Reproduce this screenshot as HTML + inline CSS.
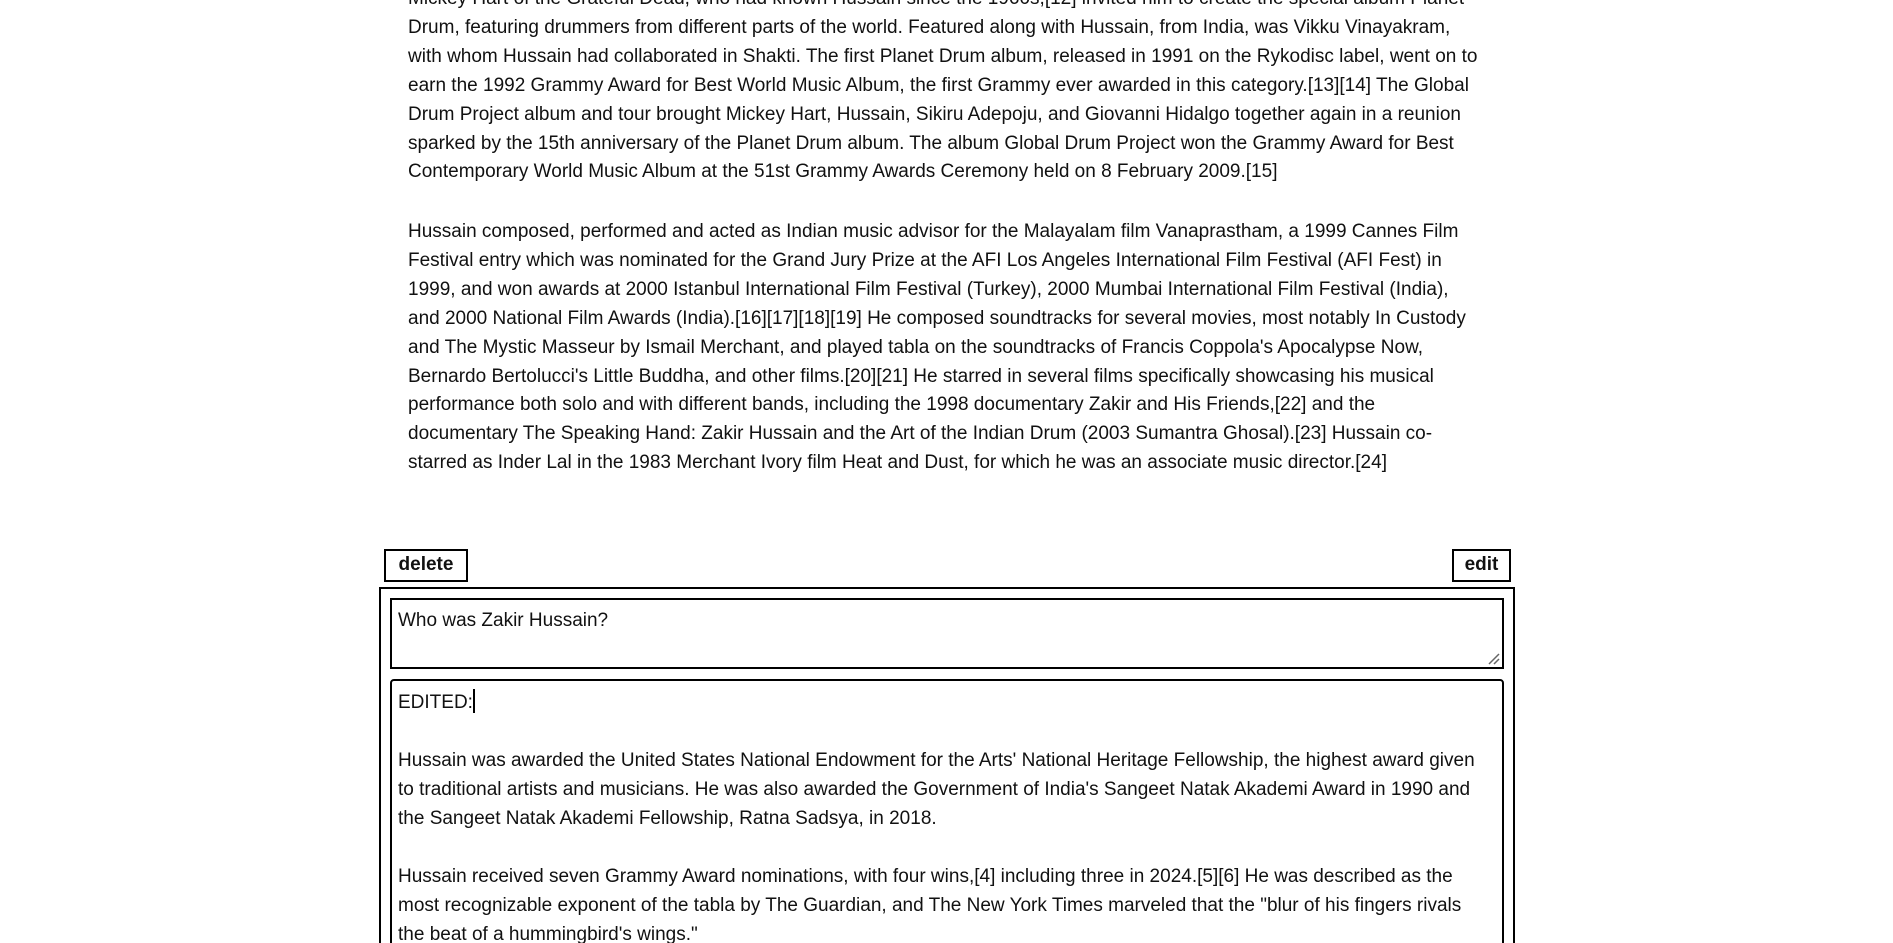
<!DOCTYPE html>
<html><head><meta charset="utf-8"><style>
html,body{margin:0;padding:0;background:#fff;width:1893px;height:943px;overflow:hidden;position:relative}
.p{position:absolute;left:408px;font-family:"Liberation Sans",sans-serif;font-size:19px;line-height:28.9px;color:#111;white-space:nowrap}
.btn{position:absolute;top:549px;height:33px;box-sizing:border-box;border:2.5px solid #000;font-family:"Liberation Sans",sans-serif;font-weight:bold;font-size:19px;line-height:28px;text-align:center;color:#111}
.box{position:absolute;border:2.5px solid #000;box-sizing:border-box}
.t{position:absolute;left:398px;font-family:"Liberation Sans",sans-serif;font-size:19px;line-height:29px;color:#111;white-space:nowrap}
</style></head><body>
<div class="p" style="top:-15px">Mickey Hart of the Grateful Dead, who had known Hussain since the 1960s,[12] invited him to create the special album Planet<br>Drum, featuring drummers from different parts of the world. Featured along with Hussain, from India, was Vikku Vinayakram,<br>with whom Hussain had collaborated in Shakti. The first Planet Drum album, released in 1991 on the Rykodisc label, went on to<br>earn the 1992 Grammy Award for Best World Music Album, the first Grammy ever awarded in this category.[13][14] The Global<br>Drum Project album and tour brought Mickey Hart, Hussain, Sikiru Adepoju, and Giovanni Hidalgo together again in a reunion<br>sparked by the 15th anniversary of the Planet Drum album. The album Global Drum Project won the Grammy Award for Best<br>Contemporary World Music Album at the 51st Grammy Awards Ceremony held on 8 February 2009.[15]</div>
<div class="p" style="top:218px">Hussain composed, performed and acted as Indian music advisor for the Malayalam film Vanaprastham, a 1999 Cannes Film<br>Festival entry which was nominated for the Grand Jury Prize at the AFI Los Angeles International Film Festival (AFI Fest) in<br>1999, and won awards at 2000 Istanbul International Film Festival (Turkey), 2000 Mumbai International Film Festival (India),<br>and 2000 National Film Awards (India).[16][17][18][19] He composed soundtracks for several movies, most notably In Custody<br>and The Mystic Masseur by Ismail Merchant, and played tabla on the soundtracks of Francis Coppola's Apocalypse Now,<br>Bernardo Bertolucci's Little Buddha, and other films.[20][21] He starred in several films specifically showcasing his musical<br>performance both solo and with different bands, including the 1998 documentary Zakir and His Friends,[22] and the<br>documentary The Speaking Hand: Zakir Hussain and the Art of the Indian Drum (2003 Sumantra Ghosal).[23] Hussain co-<br>starred as Inder Lal in the 1983 Merchant Ivory film Heat and Dust, for which he was an associate music director.[24]</div>
<div class="btn" style="left:384px;width:84px">delete</div>
<div class="btn" style="left:1452px;width:59px">edit</div>
<div class="box" style="left:379px;top:587px;width:1136px;height:400px"></div>
<div class="box" style="left:390px;top:598px;width:1114px;height:71px"></div>
<svg style="position:absolute;left:1486px;top:651px" width="16" height="16"><path d="M3 13L13 3M8 13L13 8" stroke="#666" stroke-width="1.5"/></svg>
<div class="box" style="left:390px;top:679px;width:1114px;height:300px;border-radius:4px"></div>
<div class="t" style="top:606px">Who was Zakir Hussain?</div>
<div class="t" style="top:688px">EDITED:<span style="display:inline-block;width:2px;height:24px;background:#000;vertical-align:-5px"></span><br><br>Hussain was awarded the United States National Endowment for the Arts' National Heritage Fellowship, the highest award given<br>to traditional artists and musicians. He was also awarded the Government of India's Sangeet Natak Akademi Award in 1990 and<br>the Sangeet Natak Akademi Fellowship, Ratna Sadsya, in 2018.<br><br>Hussain received seven Grammy Award nominations, with four wins,[4] including three in 2024.[5][6] He was described as the<br>most recognizable exponent of the tabla by The Guardian, and The New York Times marveled that the "blur of his fingers rivals<br>the beat of a hummingbird's wings."</div>
</body></html>
